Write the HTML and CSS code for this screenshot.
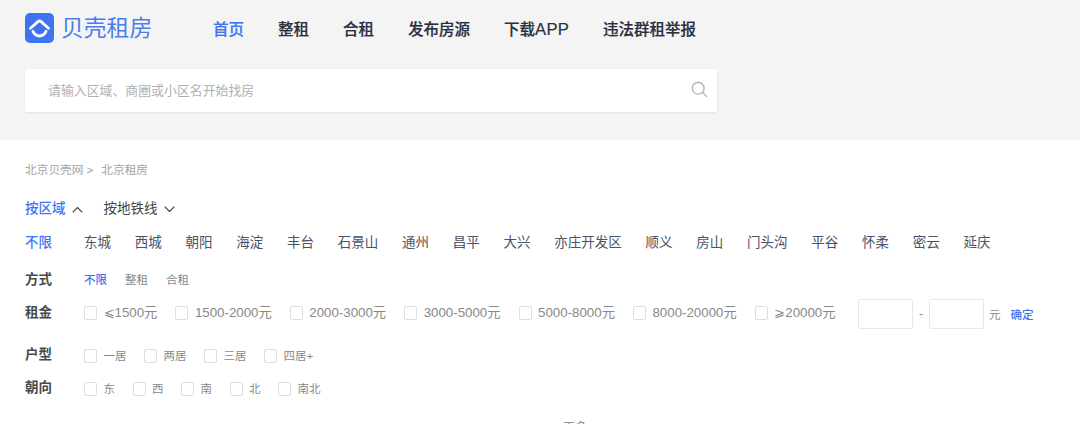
FILE: index.html
```html
<!DOCTYPE html>
<html lang="zh-CN">
<head>
<meta charset="utf-8">
<title>贝壳租房</title>
<link rel="stylesheet" href="styles.css">
</head>
<body>
<header class="top">
  <div class="bar">
    <a class="logo">
      <svg class="logo-icon" width="29" height="30" viewBox="0 0 29 30">
        <rect width="29" height="30" rx="5" fill="#3f74f0"/>
        <path d="M5.500 15.200 12.600 8.900a2.900 2.900 0 0 1 3.800 0L23.500 15.200" fill="none" stroke="#fff" stroke-width="2.800" stroke-linecap="round" stroke-linejoin="round"/>
        <path d="M8 18.400c1.400 3.200 3.800 4.600 6.500 4.600s5.100-1.400 6.500-4.600" fill="none" stroke="#fff" stroke-width="2.800" stroke-linecap="round"/>
      </svg>
      <span class="logo-text">贝壳租房</span>
    </a>
    <nav class="nav">
      <a class="nav-item on">首页</a>
      <a class="nav-item">整租</a>
      <a class="nav-item">合租</a>
      <a class="nav-item">发布房源</a>
      <a class="nav-item">下载<span class="nav-en">APP</span></a>
      <a class="nav-item">违法群租举报</a>
    </nav>
  </div>
  <div class="search">
    <span class="placeholder">请输入区域、商圈或小区名开始找房</span>
    <svg width="17" height="17" viewBox="0 0 17 17" fill="none" stroke="#b4b4b4" stroke-width="1.4">
      <circle cx="7.2" cy="7.2" r="5.9"/>
      <path d="M11.6 11.6 15.6 15.6" stroke-linecap="round"/>
    </svg>
  </div>
</header>
<main class="main">
  <div class="crumbs"><span>北京贝壳网</span><span class="gt">&gt;</span><span>北京租房</span></div>
  <div class="tabs">
    <span class="tab on">按区域<svg class="chev" width="11" height="7" viewBox="0 0 11 7"><path d="M.7 6.300 5.500 1.500 10.300 6.300" fill="none" stroke="#3a3a3a" stroke-width="1.100"/></svg></span>
    <span class="tab">按地铁线<svg class="chev" width="11" height="7" viewBox="0 0 11 7"><path d="M.7 .7 5.500 5.500 10.300 .7" fill="none" stroke="#3a3a3a" stroke-width="1.100"/></svg></span>
  </div>
  <div class="districts">
    <a class="d first on">不限</a><a class="d">东城</a><a class="d">西城</a><a class="d">朝阳</a><a class="d">海淀</a><a class="d">丰台</a><a class="d">石景山</a><a class="d">通州</a><a class="d">昌平</a><a class="d">大兴</a><a class="d">亦庄开发区</a><a class="d">顺义</a><a class="d">房山</a><a class="d">门头沟</a><a class="d">平谷</a><a class="d">怀柔</a><a class="d">密云</a><a class="d">延庆</a>
  </div>
  <div class="row row-way">
    <span class="label">方式</span>
    <div class="opts way"><a class="on">不限</a><a>整租</a><a>合租</a></div>
  </div>
  <div class="row row-rent">
    <span class="label">租金</span>
    <div class="opts checks rent">
      <span class="c"><i></i>⩽1500元</span>
      <span class="c"><i></i>1500-2000元</span>
      <span class="c"><i></i>2000-3000元</span>
      <span class="c"><i></i>3000-5000元</span>
      <span class="c"><i></i>5000-8000元</span>
      <span class="c"><i></i>8000-20000元</span>
      <span class="c"><i></i>⩾20000元</span>
    </div>
    <div class="range">
      <span class="box"></span><span class="dash">-</span><span class="box"></span><span class="unit">元</span><a class="ok">确定</a>
    </div>
  </div>
  <div class="row row-type">
    <span class="label">户型</span>
    <div class="opts checks type">
      <span class="c"><i></i>一居</span>
      <span class="c"><i></i>两居</span>
      <span class="c"><i></i>三居</span>
      <span class="c"><i></i>四居+</span>
    </div>
  </div>
  <div class="row row-dir">
    <span class="label">朝向</span>
    <div class="opts checks dir">
      <span class="c"><i></i>东</span>
      <span class="c"><i></i>西</span>
      <span class="c"><i></i>南</span>
      <span class="c"><i></i>北</span>
      <span class="c"><i></i>南北</span>
    </div>
  </div>
  <div class="more">更多</div>
</main>
</body>
</html>
```
FILE: styles.css
```css
* { box-sizing: border-box; }
html, body { margin: 0; padding: 0; height: 424px; overflow: hidden; background: #fff; }
body { font-family: "Liberation Sans", "Noto Sans CJK SC", sans-serif; color: #333; }

.top { background: #f4f4f4; height: 140px; padding: 13px 0 0 25px; }
.bar { display: flex; align-items: center; height: 30px; }
.logo { display: flex; align-items: center; width: 188px; }
.logo-icon { flex: none; }
.logo-text { margin-left: 7px; font-size: 22.8px; line-height: 30px; font-weight: 400; color: #4a7cec; }
.nav { display: flex; gap: 34px; padding-top: 2px; }
.nav-item { font-family: "Noto Sans CJK SC", sans-serif; font-size: 15.5px; line-height: 26px; font-weight: 500; color: #2a2f40; -webkit-text-stroke: .2px #2a2f40; }
.nav-item.on { color: #3f74f0; -webkit-text-stroke: .2px #3f74f0; }
.nav-en { font-family: "Liberation Sans", sans-serif; font-size: 16.6px; letter-spacing: .25px; }

.search { display: flex; align-items: center; justify-content: space-between; width: 692px; height: 43px; margin-top: 26px; padding: 0 9px 2px 23px; background: #fff; border-radius: 2px; box-shadow: 0 1px 2px rgba(0,0,0,.08); }
.placeholder { font-size: 12.9px; color: #b0b0b0; }

.main { padding: 0 0 0 25px; }
.crumbs { display: flex; height: 20px; margin-top: 20px; font-size: 11.7px; line-height: 20px; color: #a3a3a3; }
.gt { margin: 0 8px 0 3px; }

.tabs { display: flex; gap: 21px; margin-top: 19px; height: 20px; font-size: 13.5px; line-height: 20px; color: #444; }
.tab { display: flex; align-items: center; }
.tab.on { color: #3f74f0; font-weight: 500; }
.chev { margin-left: 6px; }

.districts { display: flex; height: 20px; margin-top: 14px; font-size: 13.5px; line-height: 20px; color: #4a5266; }
.d { margin-right: 23.75px; white-space: nowrap; }
.d.first { margin-right: 32px; font-weight: 500; }
.d.on { color: #3f74f0; }

.row { display: flex; align-items: center; }
.label { width: 59px; flex: none; margin-bottom: 2px; font-size: 13.5px; font-weight: 700; color: #4a4a4a; line-height: 20px; }
.opts { display: flex; font-size: 11.5px; color: #888; line-height: 18px; }

.row-way { margin-top: 17px; height: 20px; }
.row-way .label { margin-bottom: 0; }
.way { gap: 18px; }
.way .on { color: #3f74f0; font-weight: 500; }

.row-rent { margin-top: 9px; height: 30px; }
.c { display: flex; align-items: center; white-space: nowrap; }
.c i { width: 13px; height: 14px; margin-right: 6.5px; border: 1.5px solid #dedede; border-radius: 2px; background: #fff; }
.rent { gap: 18px; width: 774px; margin-bottom: 2px; font-size: 13.3px; }

.range { display: flex; align-items: center; height: 30px; font-size: 11.5px; color: #888; }
.box { width: 55px; height: 30px; border: 1.5px solid #e8e8e8; border-radius: 2px; }
.dash { width: 16px; text-align: center; font-size: 12px; }
.unit { margin-left: 5px; }
.ok { margin-left: 10px; color: #3f74f0; font-weight: 500; }

.row-type { margin-top: 12px; height: 30px; }
.type { gap: 17.5px; }
.row-dir { margin-top: 3px; height: 30px; }
.dir { gap: 17.5px; }

.more { margin-top: 15px; padding-left: 538px; font-size: 12px; line-height: 18px; color: #7a8699; }
```
